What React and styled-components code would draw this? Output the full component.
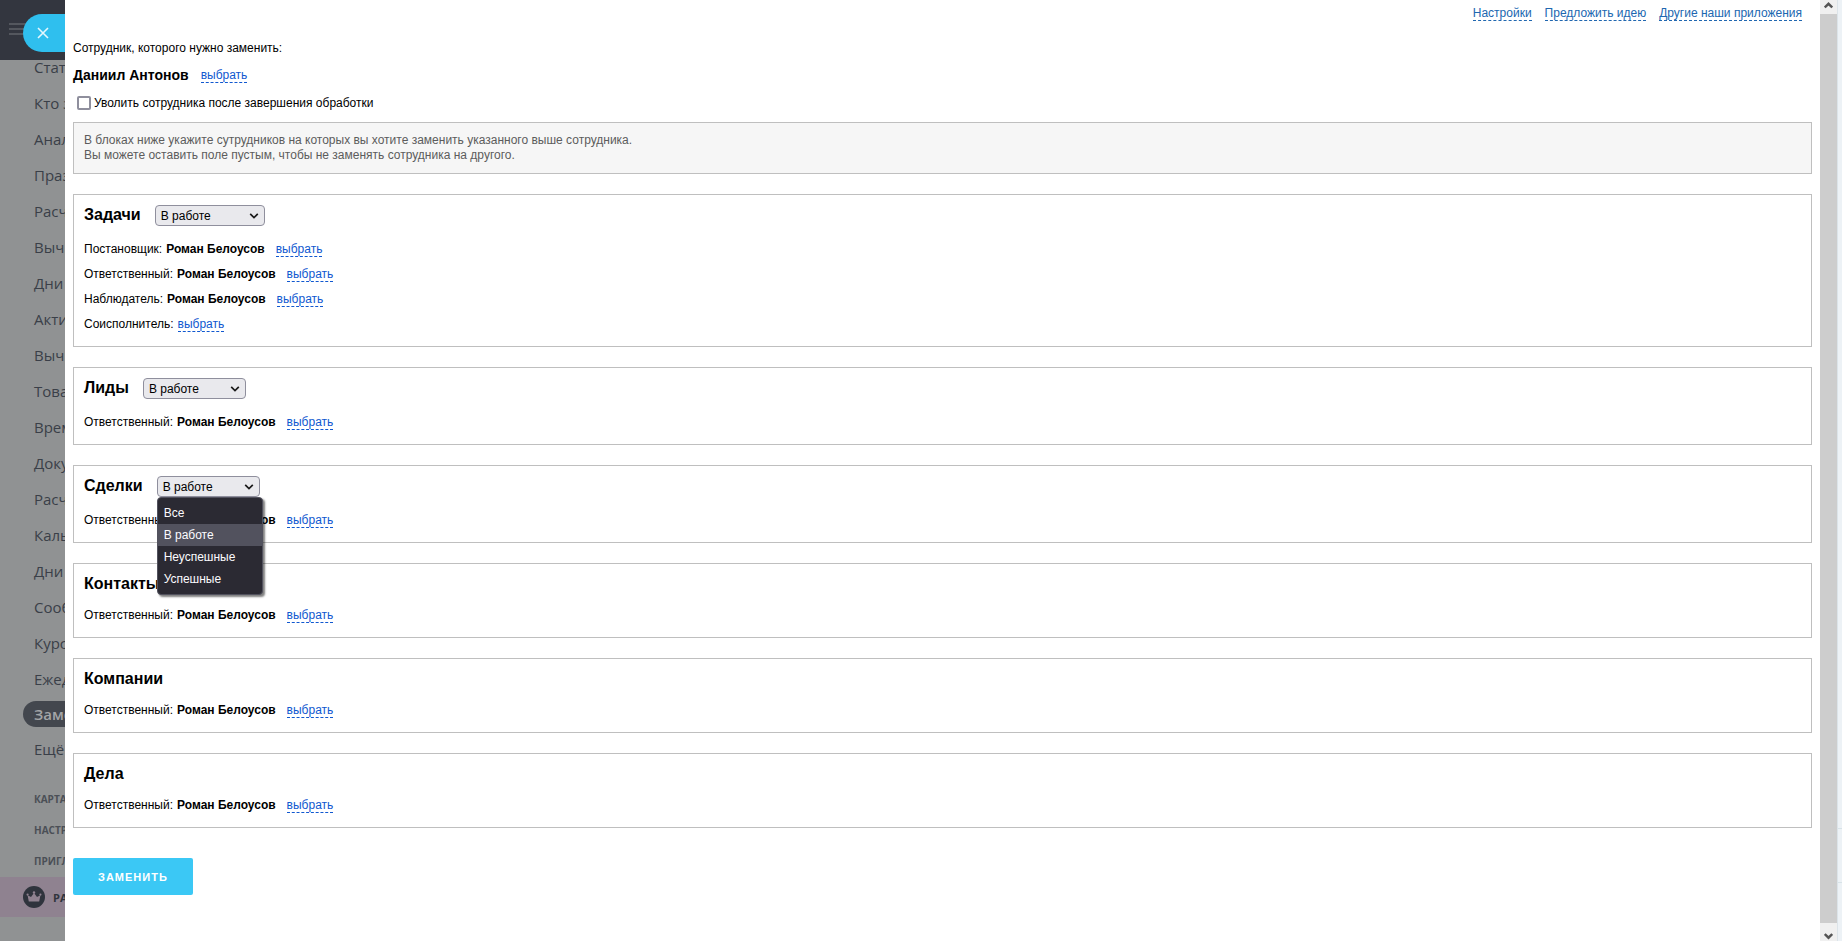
import { useState } from 'react';
import styled, { createGlobalStyle, css } from 'styled-components';

const GlobalStyle = createGlobalStyle`
  * {
    box-sizing: border-box;
  }

  body {
    margin: 0;
    background: #909293;
    color: #000;
    font-family: "Liberation Sans", Arial, sans-serif;
    font-size: 12px;
    line-height: 15px;
  }
`;

const Page = styled.div`
  display: flex;
  min-height: 100vh;
`;

const Sidebar = styled.aside`
  position: relative;
  flex: 0 0 65px;
  overflow: hidden;
  color: #3a3f48;
  font-family: "Open Sans", sans-serif;
  white-space: nowrap;
`;

const SidebarTop = styled.div`
  display: flex;
  height: 60px;
  padding: 22px 0 0 9px;
  background: #33363f;
`;

const CloseButton = styled.button`
  position: absolute;
  top: 14px;
  right: 0;
  display: flex;
  align-items: center;
  width: 42px;
  height: 38px;
  padding: 0 0 0 14px;
  border: none;
  border-radius: 19px 0 0 19px;
  background: #2fbfee;
  cursor: pointer;
`;

const MenuClip = styled.div`
  overflow: hidden;
`;

const Menu = styled.nav`
  display: flex;
  flex-direction: column;
  margin-top: -11px;
`;

const MenuLink = styled.a`
  height: 36px;
  padding-left: 34px;
  color: inherit;
  font-size: 15px;
  line-height: 36px;
  text-decoration: none;

  ${({ $active }) => $active && css`
    height: 26px;
    margin: 4px 0 4px 23px;
    padding-left: 11px;
    border-radius: 13px 0 0 13px;
    background: #43474e;
    color: #a3a5a7;
    font-weight: 600;
    line-height: 26px;
  `}
`;

const ServiceMenu = styled.nav`
  display: flex;
  flex-direction: column;
  padding: 17px 0 0 34px;
`;

const ServiceLink = styled.a`
  height: 31px;
  color: #4b4f56;
  font-size: 10px;
  font-weight: 700;
  line-height: 31px;
  text-decoration: none;
`;

const Promo = styled.a`
  display: flex;
  align-items: center;
  gap: 8px;
  height: 40px;
  padding-left: 23px;
  background: #8f8290;
  color: #2f343d;
  font-size: 11px;
  font-weight: 700;
  text-decoration: none;

  svg {
    flex-shrink: 0;
  }
`;

const Panel = styled.main`
  flex: 1;
  min-width: 0;
  padding: 6px 8px 40px;
  background: #fff;
`;

const TopLinks = styled.nav`
  display: flex;
  justify-content: flex-end;
  gap: 13px;
  padding-right: 10px;
`;

const DashedLink = styled.a`
  border-bottom: 1px dashed currentColor;
  color: ${({ $muted }) => ($muted ? '#2067b0' : '#1058d0')};
  line-height: 14px;
  text-decoration: none;
`;

const Intro = styled.p`
  margin: 20px 0 0;
`;

const Person = styled.div`
  display: flex;
  align-items: center;
  gap: 12px;
  height: 18px;
  margin-top: 10px;
`;

const PersonName = styled.strong`
  font-size: 14px;
`;

const FireLabel = styled.label`
  display: flex;
  align-items: center;
  gap: 3px;
  height: 18px;
  margin: 10px 0;
  padding-left: 4px;
`;

const Checkbox = styled.input`
  appearance: none;
  width: 14px;
  height: 14px;
  margin: 0;
  border: 2px solid #8f8f9d;
  border-radius: 2px;
  background: #fff;

  &:checked {
    background: #1058d0;
  }
`;

const Notice = styled.div`
  padding: 10px;
  border: 1px solid #bfbfbf;
  background: #f6f6f6;
  color: #5c5c5c;

  p {
    margin: 0;
  }
`;

const Section = styled.section`
  margin-top: 20px;
  padding: 10px 10px 9px;
  border: 1px solid #bfbfbf;
`;

const SectionHead = styled.div`
  display: flex;
  align-items: flex-start;
  gap: 14px;
  height: ${({ $select }) => ($select ? '21px' : '18px')};
  margin-bottom: 11px;
`;

const SectionTitle = styled.h2`
  margin: 0;
  font-size: 16px;
  line-height: 20px;
`;

const SelectBox = styled.div`
  position: relative;
  width: ${({ $wide }) => ($wide ? '110px' : '103px')};

  svg {
    position: absolute;
    top: 7px;
    right: 6px;
    pointer-events: none;
  }
`;

const Select = styled.select`
  display: block;
  appearance: none;
  width: 100%;
  height: 21px;
  padding: 0 5px;
  border: 1px solid #8f8f9d;
  border-radius: 4px;
  background: #e9e9ed;
  color: #000;
  font-family: inherit;
  font-size: 12px;
`;

const Options = styled.ul`
  position: absolute;
  z-index: 1;
  top: 21px;
  left: 0;
  width: 106px;
  margin: 0;
  padding: 4px 0;
  border: 1px solid #52525e;
  border-radius: 4px;
  background: #2b2a33;
  box-shadow: 2px 2px 2px rgba(0, 0, 0, 0.5);
  color: #fbfbfe;
  list-style: none;
`;

const Option = styled.li`
  height: 22px;
  padding-left: 6px;
  background: ${({ $selected }) => ($selected ? '#52525e' : 'transparent')};
  line-height: 22px;
`;

const Row = styled.div`
  display: flex;
  align-items: center;
  height: 25px;
`;

const RowName = styled.strong`
  margin-right: 11px;
`;

const RowLabel = styled.span`
  margin-right: 4px;
`;

const SubmitButton = styled.button`
  display: block;
  height: 37px;
  margin-top: 30px;
  padding: 0 25px;
  border: none;
  border-radius: 2px;
  background: #3bc8f5;
  color: #fff;
  font-family: inherit;
  font-size: 11px;
  font-weight: 700;
  letter-spacing: 1px;
  cursor: pointer;
`;

const Scrollbar = styled.div`
  display: flex;
  flex: 0 0 17px;
  flex-direction: column;
  background: #f0f0f0;
`;

const ScrollArrow = styled.button`
  display: flex;
  justify-content: center;
  width: 17px;
  height: ${({ $down }) => ($down ? '18px' : '14px')};
  padding: ${({ $down }) => ($down ? '10px' : '2px')} 0 0;
  border: none;
  background: #f0f0f0;
`;

const ScrollThumb = styled.div`
  flex: 1;
  background: #cdcdcd;
`;

const Backdrop = styled.div`
  display: flex;
  flex: 0 0 5px;
  flex-direction: column;
  justify-content: flex-end;
  padding-bottom: 58px;
  border-left: 1px solid #dce4e9;
  background: #edf2f6;
`;

const BackdropCell = styled.div`
  height: 55px;
  border: solid #d8e3e8;
  border-width: 1px 0;
`;

const menuItems = [
  'Стат', 'Кто з', 'Анал', 'Праз', 'Расч', 'Выч', 'Дни', 'Акти', 'Выч', 'Това',
  'Врем', 'Доку', 'Расч', 'Каль', 'Дни', 'Сооб', 'Курс', 'Ежед', 'Заме', 'Ещё',
];

const serviceItems = ['КАРТА', 'НАСТР', 'ПРИГЛ'];

const person = 'Роман Белоусов';

const sections = [
  {
    id: 'tasks',
    title: 'Задачи',
    select: true,
    wide: true,
    rows: [
      { label: 'Постановщик:', name: person },
      { label: 'Ответственный:', name: person },
      { label: 'Наблюдатель:', name: person },
      { label: 'Соисполнитель:' },
    ],
  },
  { id: 'leads', title: 'Лиды', select: true, rows: [{ label: 'Ответственный:', name: person }] },
  { id: 'deals', title: 'Сделки', select: true, open: true, rows: [{ label: 'Ответственный:', name: person }] },
  { id: 'contacts', title: 'Контакты', rows: [{ label: 'Ответственный:', name: person }] },
  { id: 'companies', title: 'Компании', rows: [{ label: 'Ответственный:', name: person }] },
  { id: 'activities', title: 'Дела', rows: [{ label: 'Ответственный:', name: person }] },
];

const statuses = ['Все', 'В работе', 'Неуспешные', 'Успешные'];

function Chevron() {
  return (
    <svg width="10" height="8" viewBox="0 0 10 8" fill="none" stroke="#1a1a1a" strokeWidth="1.7">
      <path d="M1.2 1.8 5 5.6 8.8 1.8" />
    </svg>
  );
}

function ScrollChevron({ down }) {
  return (
    <svg width="9" height="7" viewBox="0 0 9 7" fill="none" stroke="#555" strokeWidth="2.4">
      <path d={down ? 'M.8 1 4.5 4.7 8.2 1' : 'M.8 5.5 4.5 1.8 8.2 5.5'} />
    </svg>
  );
}

function StatusSelect({ id, title, wide, open }) {
  const [value, setValue] = useState('В работе');

  return (
    <SelectBox $wide={wide}>
      <Select id={id} aria-label={title} value={value} onChange={(e) => setValue(e.target.value)}>
        {statuses.map((status) => (
          <option key={status}>{status}</option>
        ))}
      </Select>
      <Chevron />
      {open && (
        <Options role="listbox" aria-label={title}>
          {statuses.map((status) => (
            <Option
              key={status}
              role="option"
              aria-selected={status === value}
              $selected={status === value}
              onClick={() => setValue(status)}
            >
              {status}
            </Option>
          ))}
        </Options>
      )}
    </SelectBox>
  );
}

function App() {
  const [fire, setFire] = useState(false);

  return (
    <Page>
      <GlobalStyle />
      <Sidebar>
        <SidebarTop>
          <svg width="20" height="14" stroke="#54575e" strokeWidth="2">
            <path d="M0 2h20M0 7h20M0 12h20" />
          </svg>
        </SidebarTop>
        <CloseButton type="button" aria-label="Закрыть">
          <svg width="12" height="12" viewBox="0 0 12 12" stroke="#e4f7fd" strokeWidth="1.6">
            <path d="M1 1l10 10M11 1L1 11" />
          </svg>
        </CloseButton>
        <MenuClip>
          <Menu>
            {menuItems.map((item, i) => (
              <MenuLink key={i} href="#" $active={item === 'Заме'}>{item}</MenuLink>
            ))}
          </Menu>
        </MenuClip>
        <ServiceMenu>
          {serviceItems.map((item) => (
            <ServiceLink key={item} href="#">{item}</ServiceLink>
          ))}
        </ServiceMenu>
        <Promo href="#">
          <svg width="22" height="22" viewBox="0 0 22 22">
            <circle cx="11" cy="11" r="11" fill="#2f343d" />
            <g fill="#8f8290">
              <path d="M5.8 15.5 4.6 9.3 8 11 11 7l3 4 3.400-1.700-1.200 6.200z" />
              <circle cx="4.600" cy="8.600" r="1.100" />
              <circle cx="11" cy="6.500" r="1.200" />
              <circle cx="17.400" cy="8.600" r="1.100" />
            </g>
          </svg>
          РА
        </Promo>
      </Sidebar>

      <Panel>
        <TopLinks>
          <DashedLink $muted href="#">Настройки</DashedLink>
          <DashedLink $muted href="#">Предложить идею</DashedLink>
          <DashedLink $muted href="#">Другие наши приложения</DashedLink>
        </TopLinks>

        <Intro>Сотрудник, которого нужно заменить:</Intro>
        <Person>
          <PersonName>Даниил Антонов</PersonName>
          <DashedLink href="#">выбрать</DashedLink>
        </Person>
        <FireLabel>
          <Checkbox type="checkbox" checked={fire} onChange={(e) => setFire(e.target.checked)} />
          Уволить сотрудника после завершения обработки
        </FireLabel>

        <Notice>
          <p>В блоках ниже укажите сутрудников на которых вы хотите заменить указанного выше сотрудника.</p>
          <p>Вы можете оставить поле пустым, чтобы не заменять сотрудника на другого.</p>
        </Notice>

        {sections.map((section) => (
          <Section key={section.id}>
            <SectionHead $select={section.select}>
              <SectionTitle>{section.title}</SectionTitle>
              {section.select && (
                <StatusSelect id={section.id} title={section.title} wide={section.wide} open={section.open} />
              )}
            </SectionHead>
            {section.rows.map((row) => (
              <Row key={row.label}>
                <RowLabel>{row.label}</RowLabel>
                {row.name && <RowName>{row.name}</RowName>}
                <DashedLink href="#">выбрать</DashedLink>
              </Row>
            ))}
          </Section>
        ))}

        <SubmitButton type="button">ЗАМЕНИТЬ</SubmitButton>
      </Panel>

      <Scrollbar>
        <ScrollArrow type="button" aria-label="Вверх"><ScrollChevron /></ScrollArrow>
        <ScrollThumb />
        <ScrollArrow type="button" aria-label="Вниз" $down><ScrollChevron down /></ScrollArrow>
      </Scrollbar>
      <Backdrop>
        <BackdropCell />
      </Backdrop>
    </Page>
  );
}

export default App;
